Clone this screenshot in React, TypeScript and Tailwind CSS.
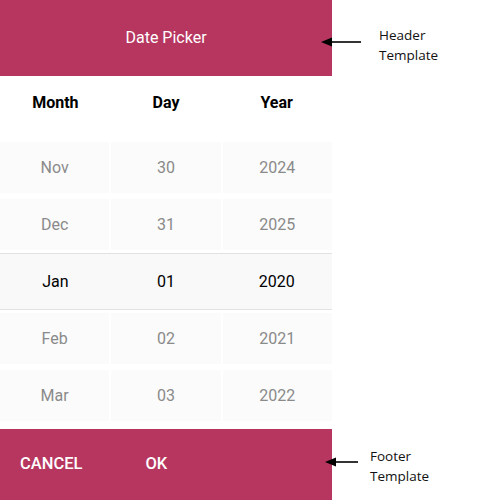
const months = ["Nov", "Dec", "Jan", "Feb", "Mar"];
const days = ["30", "31", "01", "02", "03"];
const years = ["2024", "2025", "2020", "2021", "2022"];

function Arrow({ width }: { width: number }) {
  return (
    <svg width={width} height="10" viewBox={`0 0 ${width} 10`} className="shrink-0">
      <line x1="8" y1="5" x2={width} y2="5" stroke="#000" strokeWidth="1.6" />
      <polygon points="0,5 11,0.5 11,9.5" fill="#000" />
    </svg>
  );
}

export default function App() {
  const selected = 2;

  return (
    <div className="flex h-[500px] w-[493px] bg-white font-['Roboto',sans-serif]">
      {/* Picker panel */}
      <div className="flex h-full w-[332px] shrink-0 flex-col">
        <div className="flex h-[76px] items-center justify-center bg-[#b73660] text-[16px] text-white">
          Date Picker
        </div>

        <div className="flex-1 bg-white">
          <div className="grid h-[54px] grid-cols-3 items-center text-center text-[16px] font-bold text-black">
            <span>Month</span>
            <span>Day</span>
            <span>Year</span>
          </div>

          <div className="mt-[9px]">
            {months.map((m, i) =>
              i === selected ? (
                <div
                  key={m}
                  className="grid h-[57px] grid-cols-3 items-center border-y border-[#e2e2e2] bg-[#f9f9f9] text-center text-[16px] text-black"
                >
                  <span>{m}</span>
                  <span>{days[i]}</span>
                  <span>{years[i]}</span>
                </div>
              ) : (
                <div
                  key={m}
                  className="grid h-[57px] grid-cols-3 gap-x-[2px] py-[3px] text-center text-[16px] text-[#8a8a8a]"
                >
                  <span className="flex items-center justify-center bg-[#fbfbfb]">{m}</span>
                  <span className="flex items-center justify-center bg-[#fbfbfb]">{days[i]}</span>
                  <span className="flex items-center justify-center bg-[#fbfbfb]">{years[i]}</span>
                </div>
              )
            )}
          </div>
        </div>

        <div className="flex h-[71px] items-center gap-[63px] bg-[#b73660] pl-[20px] text-[16.5px] font-medium text-white">
          <button>CANCEL</button>
          <button>OK</button>
        </div>
      </div>

      {/* Annotations */}
      <div className="flex h-full flex-col pb-[14px] pt-[25px] font-['Open_Sans',sans-serif] text-[13.5px] leading-[20px] text-[#111]">
        <div className="-ml-[11px] flex items-start">
          <div className="mt-[12px]">
            <Arrow width={40} />
          </div>
          <div className="ml-[18px]">
            Header
            <br />
            Template
          </div>
        </div>

        <div className="-ml-[7px] mt-auto flex items-start">
          <div className="mt-[11px]">
            <Arrow width={33} />
          </div>
          <div className="ml-[12px]">
            Footer
            <br />
            Template
          </div>
        </div>
      </div>
    </div>
  );
}
